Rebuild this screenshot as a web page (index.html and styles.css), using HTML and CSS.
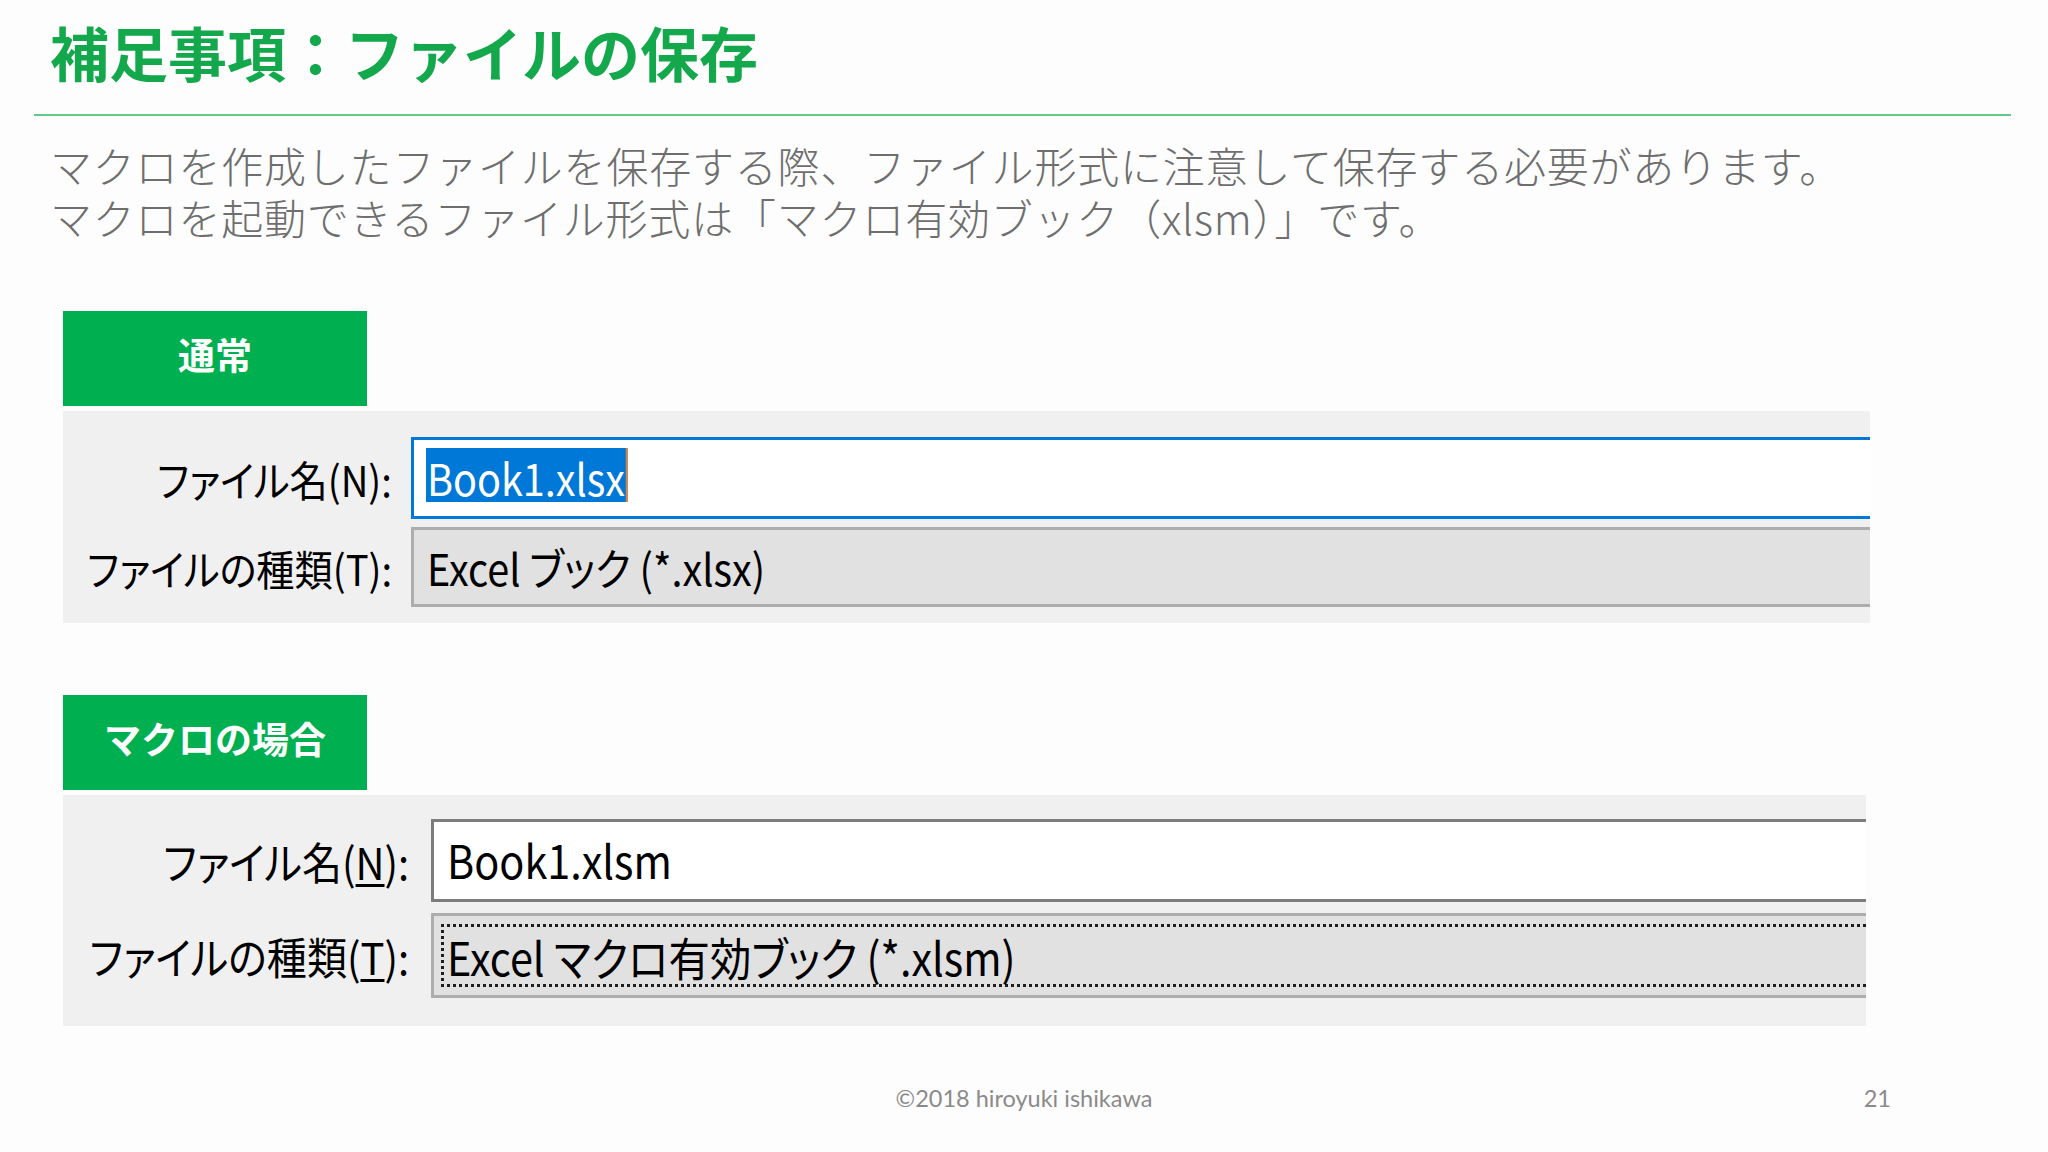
FILE: index.html
```html
<!DOCTYPE html>
<html lang="ja">
<head>
<meta charset="utf-8">
<title>補足事項：ファイルの保存</title>
<link rel="stylesheet" href="styles.css">
</head>
<body>
<div class="slide">
  <h1 class="title">補足事項：ファイルの保存</h1>
  <div class="rule"></div>
  <p class="lead">マクロを作成したファイルを保存する際、ファイル形式に注意して保存する必要があります。<br>マクロを起動できるファイル形式は「マクロ有効ブック（xlsm）」です。</p>

  <div class="tag tag-first">通常</div>
  <div class="panel panel-normal">
    <div class="label"><span class="cond-r">ファイル名(N):</span></div>
    <div class="field field-active"><span class="sel">Book1.xlsx</span></div>
    <div class="label"><span class="cond-r">ファイルの種類(T):</span></div>
    <div class="combo"><span class="cond">Excel ブック (*.xlsx)</span></div>
  </div>

  <div class="tag tag-second">マクロの場合</div>
  <div class="panel panel-macro">
    <div class="label"><span class="cond-r">ファイル名(<u>N</u>):</span></div>
    <div class="field field-plain"><span class="cond">Book1.xlsm</span></div>
    <div class="label"><span class="cond-r">ファイルの種類(<u>T</u>):</span></div>
    <div class="combo combo-focus"><span class="focus-ring"><span class="cond">Excel マクロ有効ブック (*.xlsm)</span></span></div>
  </div>

  <footer class="footer">
    <span></span>
    <span class="copy">©2018 hiroyuki ishikawa</span>
    <span class="page">21</span>
  </footer>
</div>
</body>
</html>
```

FILE: styles.css
```css
html, body {
  margin: 0;
  padding: 0;
  background: #fdfdfd;
}

.slide {
  width: 2048px;
  height: 1152px;
  overflow: hidden;
  display: flex;
  flex-direction: column;
  font-family: "Noto Sans CJK JP", "Noto Sans", sans-serif;
}

.title {
  margin: 22px 0 0 50px;
  font-size: 59px;
  line-height: 59px;
  font-weight: 700;
  color: #13a84b;
}

.rule {
  margin: 33px 0 0 34px;
  width: 1977px;
  height: 2px;
  background: #62ca89;
}

.lead {
  margin: 23px 0 0 50px;
  font-size: 42px;
  line-height: 52px;
  letter-spacing: 0.8px;
  font-weight: 300;
  color: #6e6e6e;
}

.tag {
  margin-left: 63px;
  width: 304px;
  height: 95px;
  box-sizing: border-box;
  padding-bottom: 10px;
  background: #00b050;
  color: #ffffff;
  font-size: 37px;
  font-weight: 700;
  display: flex;
  align-items: center;
  justify-content: center;
}

.tag-first { margin-top: 68px; }
.tag-second { margin-top: 72px; }

.panel {
  margin: 5px 0 0 63px;
  background: #f0f0f0;
  display: grid;
  align-items: stretch;
  color: #000;
  font-feature-settings: "palt";
}

.panel-normal {
  width: 1807px;
  grid-template-columns: 329px 1fr;
  column-gap: 19px;
  row-gap: 8px;
  padding: 26px 0 16px;
  font-size: 44px;
}

.panel-normal .label { font-size: 42px; }

.panel-macro {
  width: 1803px;
  grid-template-columns: 346px 1fr;
  column-gap: 22px;
  row-gap: 11px;
  padding: 24px 0 28px;
  font-size: 46px;
}

.panel-macro .label { font-size: 44px; }

.cond {
  display: inline-block;
  transform: scaleX(0.9);
  transform-origin: left center;
}

.cond-r {
  display: inline-block;
  transform: scaleX(0.91);
  transform-origin: right center;
}

.label {
  display: flex;
  align-items: center;
  justify-content: flex-end;
  white-space: nowrap;
}

.label u {
  text-decoration-thickness: 3px;
  text-underline-offset: 4px;
}

.field {
  background: #ffffff;
  display: flex;
  align-items: center;
  white-space: nowrap;
  box-sizing: border-box;
}

.field-active {
  height: 82px;
  border: 3px solid #0078d7;
  border-right: none;
  padding-left: 12px;
  padding-bottom: 6px;
}

.sel {
  display: inline-block;
  transform: scaleX(0.9);
  transform-origin: left center;
  background: #0078d7;
  color: #ffffff;
  height: 54px;
  line-height: 58px;
  padding: 0 1px;
  border-right: 2px solid #e8822a;
}

.field-plain {
  height: 83px;
  border: 3px solid #7d7d7d;
  border-right: none;
  padding-left: 13px;
  padding-bottom: 4px;
}

.combo {
  background: #e1e1e1;
  border: 3px solid #adadad;
  border-right: none;
  box-sizing: border-box;
  display: flex;
  align-items: center;
  white-space: nowrap;
}

.panel-normal .combo {
  height: 80px;
  padding-left: 13px;
}

.combo-focus {
  height: 85px;
  padding: 8px 0 8px 7px;
  align-items: stretch;
}

.focus-ring {
  flex: 1;
  display: flex;
  align-items: center;
  padding-left: 6px;
  background:
    repeating-linear-gradient(90deg, #1e1e1e 0 3px, transparent 3px 6px) left top / 100% 3px no-repeat,
    repeating-linear-gradient(90deg, #1e1e1e 0 3px, transparent 3px 6px) left bottom / 100% 3px no-repeat,
    repeating-linear-gradient(180deg, #1e1e1e 0 3px, transparent 3px 6px) left top / 3px 100% no-repeat;
}

.footer {
  margin-top: 57px;
  display: grid;
  grid-template-columns: 1fr auto 1fr;
  align-items: center;
  height: 30px;
  font-family: "Lato", "Liberation Sans", sans-serif;
  font-size: 23.5px;
  color: #8a8a8a;
}

.page {
  justify-self: end;
  padding-right: 157px;
}
```
